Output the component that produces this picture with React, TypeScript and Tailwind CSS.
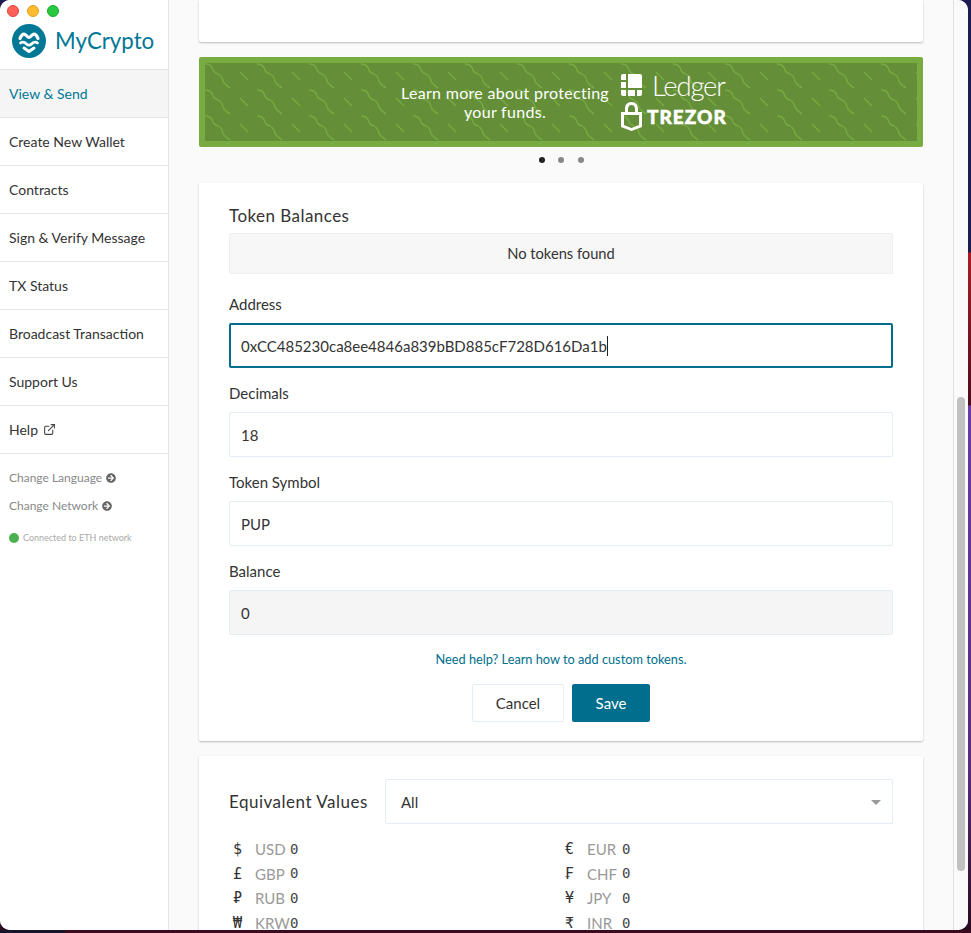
import React from 'react';
import { ExternalLink } from 'lucide-react';
import { FaArrowCircleRight } from 'react-icons/fa';

const navItems = ['Create New Wallet', 'Contracts', 'Sign & Verify Message', 'TX Status', 'Broadcast Transaction', 'Support Us'];

const leftRates = [
    { symbol: '$', code: 'USD' },
    { symbol: '£', code: 'GBP' },
    { symbol: '₽', code: 'RUB' },
    { symbol: '₩', code: 'KRW' },
];

const rightRates = [
    { symbol: '€', code: 'EUR' },
    { symbol: '₣', code: 'CHF' },
    { symbol: '¥', code: 'JPY' },
    { symbol: '₹', code: 'INR' },
];

const Logo = () => (
    <svg width="34" height="34" viewBox="0 0 34 34" className="shrink-0">
        <circle cx="17" cy="17" r="17" fill="#007896" />
        <path d="M8 14.500 C9 11.500 11 9.500 13 10.500 C14.500 11 15.500 13.500 17 13.500 C18.500 13.500 19.500 11 21 10.500 C23 9.500 25 11.500 26 14.500" fill="none" stroke="#fff" strokeWidth="3.200" strokeLinecap="round" />
        <path d="M8.500 19 C11 17 13 18.500 14.500 20 C16 21.500 18 21.500 19.500 20 C21 18.500 23 17 25.500 19" fill="none" stroke="#fff" strokeWidth="2.800" strokeLinecap="round" />
        <path d="M12 24 L17 27.500 L22 24" fill="none" stroke="#fff" strokeWidth="3" strokeLinecap="round" strokeLinejoin="round" />
    </svg>
);

const Sidebar = () => (
    <aside className="w-[169px] shrink-0 border-r border-[#e5e5e5] bg-white flex flex-col">
        <div className="h-[70px] shrink-0 border-b border-[#e0e0e0] pt-[24px] pl-[12px] flex items-start gap-[10px]">
            <Logo />
            <span className="text-[22.300px] leading-[34px] -ml-[1px] text-[#007896]">MyCrypto</span>
        </div>
        <div className="h-[48px] shrink-0 border-b border-[#e5e5e5] bg-[#f5f5f5] pl-[9px] flex items-center text-[14px] text-[#007896]">View &amp; Send</div>
        {navItems.map((item) => (
            <div key={item} className="h-[48px] shrink-0 border-b border-[#e5e5e5] pl-[9px] flex items-center text-[14px] text-[#333]">{item}</div>
        ))}
        <div className="h-[48px] shrink-0 border-b border-[#e5e5e5] pl-[9px] flex items-center gap-[5px] text-[14px] text-[#333]">
            Help
            <ExternalLink size={13} strokeWidth={2} className="text-[#444]" />
        </div>
        <div className="pl-[9px] pt-[14px] flex flex-col text-[12px] text-[#888]">
            <div className="h-[20px] flex items-center gap-[4px]">Change Language <FaArrowCircleRight size={10} className="text-[#666]" /></div>
            <div className="h-[20px] mt-[8px] flex items-center gap-[4px]">Change Network <FaArrowCircleRight size={10} className="text-[#666]" /></div>
            <div className="h-[14px] mt-[15px] flex items-center gap-[4px] text-[9px] text-[#aaa]">
                <span className="w-[10px] h-[10px] rounded-full bg-[#4cb050]" />
                Connected to ETH network
            </div>
        </div>
    </aside>
);

const Banner = () => (
    <div className="relative h-[90px] rounded-[2px] border-[6px] border-[#78ab41] bg-[#648f38] overflow-hidden flex items-center justify-center gap-[12px] pl-[4px]">
        <svg className="absolute inset-0 w-full h-full" aria-hidden="true">
            <defs>
                <pattern id="waves" width="52" height="26" patternUnits="userSpaceOnUse">
                    <path d="M0 1 C5 1 7 3 8 7 C9 10 11 10 13 11 C16 12 17 14 18 18 C19 21 21 22 25 25" fill="none" stroke="#78ab41" strokeWidth="1.300" />
                    <path d="M35 9 L43 17" fill="none" stroke="#78ab41" strokeWidth="1.300" />
                </pattern>
            </defs>
            <rect width="100%" height="100%" fill="url(#waves)" />
        </svg>
        <div className="relative text-center text-[16px] leading-[19px] tracking-[0.3px] text-white">
            <div>Learn more about protecting</div>
            <div>your funds.</div>
        </div>
        <div className="relative w-[104px] flex flex-col gap-[5px] text-white">
            <div className="flex items-center gap-[10px] h-[23px]">
                <svg width="21" height="22" viewBox="0 0 21 22" className="shrink-0">
                    <path d="M0 2 a2 2 0 0 1 2 -2 h3 v6 h-5 z M0 8 h5 v6 h-5 z M7 0 h12 a2 2 0 0 1 2 2 v12 h-14 z M0 16 h5 v6 h-3 a2 2 0 0 1 -2 -2 z M7 16 h7 v6 h-7 z M16 16 h5 v4 a2 2 0 0 1 -2 2 h-3 z" fill="#fff" />
                </svg>
                <span className="text-[27.500px] leading-[23px] font-light tracking-[-1.200px]">Ledger</span>
            </div>
            <div className="flex items-center gap-[5px] h-[29px]">
                <svg width="21" height="29" viewBox="0 0 21 29" className="shrink-0">
                    <path fillRule="evenodd" d="M10.500 0 C6 0 4 3 4 7 V10 H0 V25 L10.500 29 L21 25 V10 H17 V7 C17 3 15 0 10.500 0 Z M10.500 3 C13 3 14 5 14 7 V10 H7 V7 C7 5 8 3 10.500 3 Z M3 13 H18 V23 L10.500 26 L3 23 Z" fill="#fff" />
                </svg>
                <span className="text-[19px] leading-[29px] font-black tracking-[1px] [-webkit-text-stroke:0.5px_white]">TREZOR</span>
            </div>
        </div>
    </div>
);

const Dots = () => (
    <div className="h-[26px] mb-[10px] flex items-center justify-center gap-[13.500px]">
        <span className="w-[6px] h-[6px] rounded-full bg-[#222]" />
        <span className="w-[6px] h-[6px] rounded-full bg-[#888]" />
        <span className="w-[6px] h-[6px] rounded-full bg-[#888]" />
    </div>
);

const Field = ({ label, value, disabled }: { label: string, value: string, disabled?: boolean }) => (
    <div>
        <div className="mt-[13px] mb-[7px] h-[24px] leading-[24px] text-[#333]">{label}</div>
        <div className={`h-[45px] px-[11px] pt-[1px] flex items-center rounded-[2px] border border-[#e5ecf3] ${disabled ? 'bg-[#f5f5f5]' : 'bg-white'}`}>{value}</div>
    </div>
);

const RateColumn = ({ rates }: { rates: { symbol: string, code: string }[] }) => (
    <div className="flex flex-col">
        {rates.map((rate) => (
            <div key={rate.code} className="h-[24.600px] flex items-center text-[15px]">
                <span className="w-[26px] pr-[9px] text-center font-['DejaVu_Sans_Mono',monospace] text-[#333]">{rate.symbol}</span>
                <span className="w-[35px] text-[#999]">{rate.code}</span>
                <span className="font-['DejaVu_Sans_Mono',monospace] text-[14px] text-[#444]">0</span>
            </div>
        ))}
    </div>
);

export default function App() {
    return (
        <div className="relative w-[971px] h-[933px] overflow-hidden font-['Lato',sans-serif] bg-[linear-gradient(180deg,#1c1c50_0px,#1c1c50_252px,#a81e22_253px,#4c0c1e_405px,#6a3aa8_406px,#5b2a7a_770px,#2a0a1e_933px)]">
            <div className="w-[968px] h-[930px] rounded-[10px] overflow-hidden flex bg-[#fafafa] text-[15px] text-[#333]">
                <Sidebar />
                <main className="flex-1 min-w-0 px-[30px] overflow-hidden">
                    <div className="h-[42px] rounded-b-[2px] bg-white shadow-[0_1px_2px_rgba(0,0,0,0.25)]" />
                    <div className="mt-[15px]">
                        <Banner />
                    </div>
                    <Dots />
                    <section className="bg-white rounded-[2px] shadow-[0_1px_2px_rgba(0,0,0,0.25)] px-[30px] pt-[21px] pb-[19px]">
                        <div className="h-[24px] leading-[24px] mb-[5px] text-[17px] tracking-[0.45px]">Token Balances</div>
                        <div className="h-[41px] flex items-center justify-center rounded-[2px] border border-[#eeeeee] bg-[#f7f7f7] text-[14.700px]">No tokens found</div>
                        <div className="mt-[18px] mb-[7px] h-[24px] leading-[24px]">Address</div>
                        <div className="h-[45px] px-[10px] flex items-center rounded-[2px] border-2 border-[#006e8c]">
                            <span className="border-r border-[#222] leading-[20px]">0xCC485230ca8ee4846a839bBD885cF728D616Da1b</span>
                        </div>
                        <Field label="Decimals" value="18" />
                        <Field label="Token Symbol" value="PUP" />
                        <Field label="Balance" value="0" disabled />
                        <div className="mt-[14px] h-[20px] leading-[20px] text-center text-[12.750px] text-[#006e8c]">Need help? Learn how to add custom tokens.</div>
                        <div className="mt-[15px] flex justify-center gap-[8px]">
                            <button className="w-[92px] h-[38px] rounded-[2px] border border-[#e5ecf3] bg-white text-[#333]">Cancel</button>
                            <button className="w-[78px] h-[38px] rounded-[2px] bg-[#006e8c] text-white">Save</button>
                        </div>
                    </section>
                    <section className="mt-[15px] bg-white rounded-[2px] shadow-[0_1px_2px_rgba(0,0,0,0.25)] px-[30px] pt-[23px] pb-[20px]">
                        <div className="flex items-center">
                            <div className="w-[156px] shrink-0 text-[17px] tracking-[0.5px]">Equivalent Values</div>
                            <div className="flex-1 h-[45px] pl-[15px] pr-[11px] pt-[1px] flex items-center justify-between rounded-[2px] border border-[#e5ecf3]">
                                All
                                <span className="w-0 h-0 border-x-[5px] border-t-[5px] border-x-transparent border-t-[#999]" />
                            </div>
                        </div>
                        <div className="mt-[13px] grid grid-cols-[332px_1fr]">
                            <RateColumn rates={leftRates} />
                            <RateColumn rates={rightRates} />
                        </div>
                    </section>
                </main>
                <div className="w-[15px] shrink-0 border-l border-[#e0e0e0] bg-[#fafafa] pt-[397px] pl-[3px]">
                    <div className="w-[8px] h-[474px] rounded-full bg-[#c1c1c1]" />
                </div>
            </div>
            <div className="h-[3px] flex">
                <div className="w-[65px] bg-[#15152b]" />
                <div className="flex-1 bg-[#3a0a1e]" />
            </div>
            <div className="absolute left-[7px] top-[5px] flex gap-[8px]">
                <span className="w-[12px] h-[12px] rounded-full bg-[#ff5f57] border border-[#e0443e]" />
                <span className="w-[12px] h-[12px] rounded-full bg-[#febc2e] border border-[#dea123]" />
                <span className="w-[12px] h-[12px] rounded-full bg-[#28c840] border border-[#1aab29]" />
            </div>
        </div>
    );
}
